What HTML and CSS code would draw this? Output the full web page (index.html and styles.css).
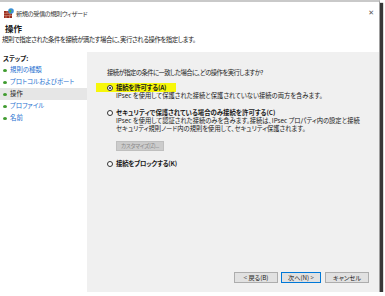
FILE: index.html
```html
<!DOCTYPE html>
<html lang="ja">
<head>
    <meta charset="UTF-8">
    <title>新規の受信の規則ウィザード</title>
    <link rel="stylesheet" href="styles.css">
</head>
<body>
    <div class="window">
        <div class="titlebar">
            <svg class="title-icon" width="10" height="10" viewBox="0 0 10 10">
                <rect x="0" y="3" width="8" height="7" fill="#9b2d1f"/>
                <path d="M0 5.3h8M0 7.6h8M3 3v2.3M6 5.3v2.3M2 7.6v2.4M5.5 7.6v2.4" stroke="#d9a58c" stroke-width="0.6"/>
                <circle cx="7" cy="3" r="2.8" fill="#3b8fd8"/>
                <path d="M5.3 2.2c.8-.9 1.8-.4 2 .3.3.9-.6 1.3-.2 2.2-.9-.1-1.6-.9-1.8-1.6z" fill="#4caf3a"/>
            </svg>
            <span class="title-text">新規の受信の規則ウィザード</span>
            <span class="close">✕</span>
        </div>
        <div class="header">
            <h1>操作</h1>
            <p>規則で指定された条件を接続が満たす場合に、実行される操作を指定します。</p>
        </div>
        <div class="body">
            <div class="steps">
                <div class="steps-title">ステップ:</div>
                <div class="step">規則の種類</div>
                <div class="step">プロトコルおよびポート</div>
                <div class="step current">操作</div>
                <div class="step">プロファイル</div>
                <div class="step">名前</div>
            </div>
            <div class="content">
                <div class="question">接続が指定の条件に一致した場合に、どの操作を実行しますか?</div>

                <div class="option first">
                    <span class="marker">
                        <span class="radio checked"></span>
                        <span class="label">接続を許可する(A)</span>
                    </span>
                </div>
                <div class="desc">IPsec を使用して保護された接続と保護されていない接続の両方を含みます。</div>

                <div class="option">
                    <span class="radio"></span>
                    <span class="label wide">セキュリティで保護されている場合のみ接続を許可する(C)</span>
                </div>
                <div class="desc">IPsec を使用して認証された接続のみを含みます。接続は、IPsec プロパティ内の設定と接続<br>セキュリティ規則ノード内の規則を使用して、セキュリティ保護されます。</div>
                <button class="btn customize" disabled>カスタマイズ(Z)...</button>

                <div class="option">
                    <span class="radio"></span>
                    <span class="label">接続をブロックする(K)</span>
                </div>

                <div class="buttons">
                    <button class="btn">&lt; 戻る(B)</button>
                    <button class="btn default">次へ(N) &gt;</button>
                    <button class="btn cancel">キャンセル</button>
                </div>
            </div>
        </div>
    </div>
</body>
</html>
```

FILE: styles.css
```css
* {
    margin: 0;
    padding: 0;
    box-sizing: border-box;
}

body {
    background: #fff;
    font-family: "Noto Sans CJK JP", "Noto Sans", sans-serif;
    font-feature-settings: "palt";
    font-size: 6.4px;
    color: #1a1a1a;
}

.window {
    width: 380px;
    height: 292px;
    display: flex;
    flex-direction: column;
    background: #fff;
    border-top: 2px solid #c9c9c9;
    border-right: 1px solid #a0a0a0;
    box-shadow: 3px 3px 1px rgba(20, 20, 20, 0.85);
}

/* タイトルバー */
.titlebar {
    height: 21px;
    display: flex;
    align-items: center;
    padding-left: 4px;
    padding-right: 5px;
    padding-top: 1px;
}

.title-icon {
    margin-right: 2px;
}

.title-text {
    flex: 1;
    color: #333;
    font-size: 6.2px;
    letter-spacing: -0.4px;
}

.close {
    font-family: "DejaVu Sans", sans-serif;
    font-size: 7px;
    color: #555;
}

/* ヘッダー */
.header {
    height: 29px;
}

.header h1 {
    font-size: 8.5px;
    font-weight: bold;
    line-height: 10px;
    padding-left: 5px;
}

.header p {
    line-height: 10px;
    margin-top: 2px;
    padding-left: 2px;
    letter-spacing: -0.45px;
}

/* 本体 */
.body {
    flex: 1;
    display: flex;
}

.steps {
    width: 87px;
    background: #fff;
    padding-top: 2px;
}

.steps-title {
    font-weight: bold;
    line-height: 10px;
    padding-left: 3px;
}

.step {
    height: 12px;
    line-height: 12px;
    padding-left: 10px;
    color: #1e6fd0;
    position: relative;
}

.step::before {
    content: "";
    position: absolute;
    left: 3px;
    top: 5px;
    width: 4px;
    height: 3px;
    border-radius: 50%;
    background: #3f9b2f;
}

.step.current {
    background: #e6e6e6;
    color: #222;
}

.content {
    flex: 1;
    background: #f0f0f0;
    padding: 16px 10px 9px 20px;
    display: flex;
    flex-direction: column;
    align-items: flex-start;
}

.question {
    line-height: 10px;
    letter-spacing: -0.6px;
}

.option {
    display: flex;
    align-items: center;
    height: 9px;
    margin-top: 8px;
}

.option.first {
    margin-top: 5px;
}

.marker {
    display: flex;
    align-items: center;
    height: 9px;
    background: #f7f70a;
    margin-left: -11px;
    padding-left: 11px;
    padding-right: 10px;
}

.radio {
    width: 6px;
    height: 6px;
    border: 1px solid #333;
    border-radius: 50%;
    background: #fff;
    margin-right: 3px;
    position: relative;
}

.radio.checked::after {
    content: "";
    position: absolute;
    left: 1px;
    top: 1px;
    width: 2px;
    height: 2px;
    border-radius: 50%;
    background: #222;
}

.label {
    font-weight: bold;
    font-size: 6.4px;
    letter-spacing: -0.2px;
    white-space: nowrap;
}

.label.wide {
    letter-spacing: 0;
}

.desc {
    line-height: 8px;
    padding-left: 9px;
    font-size: 6.3px;
    white-space: nowrap;
}

.btn {
    font-family: inherit;
    font-feature-settings: "palt";
    font-size: 6.2px;
    height: 11px;
    padding: 0 2px;
    background: #e1e1e1;
    border: 1px solid #adadad;
    color: #1a1a1a;
    white-space: nowrap;
}

.customize {
    margin-top: 8px;
    margin-left: 9px;
    width: 48px;
    height: 10px;
    padding: 0;
    background: #cccccc;
    border-color: #bfbfbf;
    color: #8a8a8a;
    font-size: 5.6px;
    letter-spacing: -0.3px;
}

.buttons {
    margin-top: auto;
    align-self: flex-end;
    display: flex;
    gap: 3px;
}

.buttons .btn {
    width: 44px;
}

.buttons .default {
    width: 40px;
    border-color: #0078d7;
    margin-right: 1px;
}
```
